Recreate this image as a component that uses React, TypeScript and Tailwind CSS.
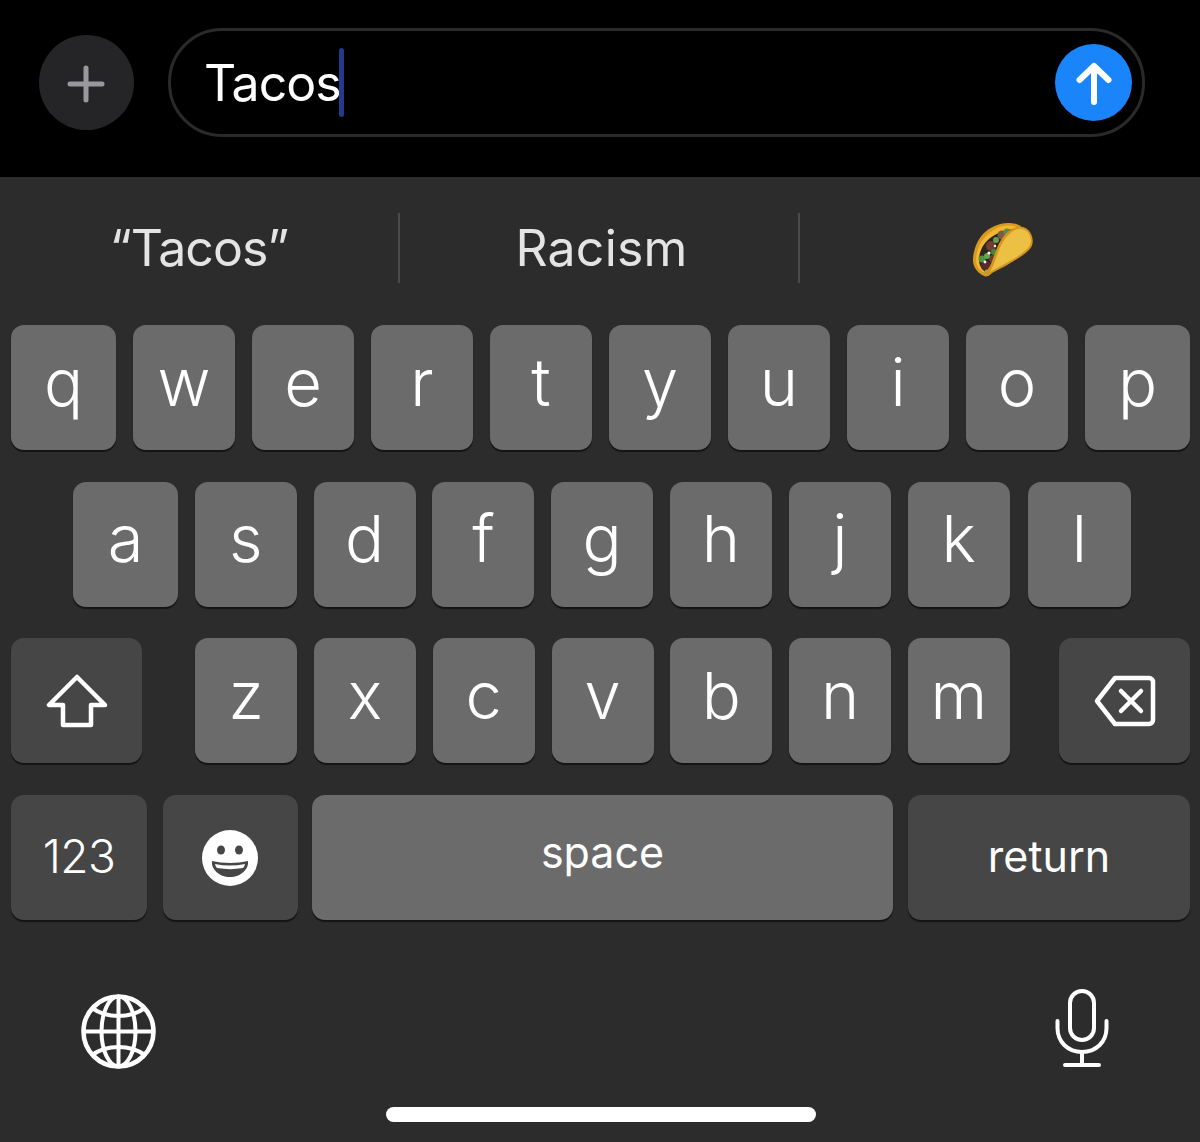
import React from "react";

const keyBase =
  "flex items-center justify-center rounded-[13px] text-white shadow-[0_2px_1px_rgba(0,0,0,0.55)] h-[125px]";
const light = "bg-[#6b6b6b]";
const dark = "bg-[#464646]";
const letterText = "text-[65px] font-light leading-none pb-[11px] shrink-0";

function Letter({ c, w = "w-[102px]" }: { c: string; w?: string }) {
  return <div className={`${keyBase} ${light} ${w} ${letterText}`}>{c}</div>;
}

function Taco() {
  return (
    <svg width="62" height="56" viewBox="0 0 62 56">
      <path d="M11 54C3 50 0 44 0 38 0 30 3 20 10 12 17 5 26 1 35 1c5 0 10 1 13 3L18 52c-2 2-5 3-7 2z" fill="#d9981f" />
      <path d="M3 38C3 29 7 20 13 14 19 8 26 4 34 3.500c3 0 8 .5 10 1.500L16 50c-2 1-4 1-6 0-4-2-7-7-7-12z" fill="#efb832" />
      <path d="M6 38C6 30 10 22 16 17c6-5 14-9 26-10L20 42l-5 9c-4-1-9-6-9-13z" fill="#30241c" />
      <circle cx="13" cy="44" r="5" fill="#5b2a2a" />
      <circle cx="20" cy="37" r="4" fill="#6a3a30" />
      <circle cx="18" cy="24" r="5" fill="#6f3f36" />
      <circle cx="29" cy="13" r="4.500" fill="#7b5a48" />
      <circle cx="34" cy="10" r="3.500" fill="#5f8a48" />
      <circle cx="9" cy="37" r="3.500" fill="#4f9240" />
      <circle cx="14" cy="34" r="3" fill="#62a650" />
      <circle cx="21" cy="30" r="3" fill="#3f8a3c" />
      <circle cx="23" cy="18" r="3" fill="#6aa050" />
      <circle cx="14" cy="50" r="2.500" fill="#a0a83a" />
      <circle cx="16" cy="31" r="1.600" fill="#f4f4f4" />
      <circle cx="12" cy="40" r="1.400" fill="#f4f4f4" />
      <circle cx="20" cy="41" r="1.200" fill="#f4f4f4" />
      <circle cx="22" cy="24" r="1.200" fill="#f4f4f4" />
      <path
        d="M14 54C12 52 14 48 17 44 20 38 21 33 24 26 27 18 33 9 42 5.500 49 3 55 6 58 12c3 6 2 12-2 16-3 3-7 6-12 9-8 5-17 10-25 14-2 1-4 3-5 3z"
        fill="#d3951f"
      />
      <path
        d="M17 50C21 43 23 36 26 28 29 20 35 11 43 7.500 49 5.500 54 8 56.500 13 59 18 58 23 54.500 26.500 51 30 47 33 43 35.500 35 40 26 45 17 50z"
        fill="#ecbf45"
      />
    </svg>
  );
}

function Globe() {
  return (
    <svg width="75" height="75" viewBox="0 0 75 75" fill="none" stroke="#fff" strokeWidth="4">
      <circle cx="37.500" cy="37.500" r="35" strokeWidth="4.600" />
      <ellipse cx="37.500" cy="37.500" rx="17" ry="35" />
      <path d="M37.500 2.500v70M2.500 37.500h70" />
      <path d="M11 14c7 5 16 8 26.500 8S57 19 64 14M11 61c7-5 16-8 26.500-8S57 56 64 61" />
    </svg>
  );
}

function Mic() {
  return (
    <svg width="54" height="78" viewBox="0 0 54 78" fill="none" stroke="#fff" strokeWidth="4" strokeLinecap="round">
      <rect x="15" y="2" width="24" height="49" rx="12" />
      <path d="M2.500 32v7c0 14 10.500 24 24.500 24s24.500-10 24.500-24v-7" />
      <path d="M27 63v13M10 76h34" />
    </svg>
  );
}

export default function App() {
  const sans = { fontFamily: "Inter, 'Liberation Sans', sans-serif" };
  return (
    <div className="w-[1200px] h-[1142px] bg-[#2c2c2c] overflow-hidden flex flex-col" style={sans}>
      <div className="h-[177px] bg-black flex items-start pl-[39px] pr-[55px] pt-[28px] gap-[34px] shrink-0">
        <div className="w-[95px] h-[95px] mt-[7px] rounded-full bg-[#252527] flex items-center justify-center shrink-0 pt-[2px] pr-[1px]">
          <svg width="38" height="38" viewBox="0 0 38 38" stroke="#98989d" strokeWidth="5" strokeLinecap="round">
            <path d="M19 3v32M3 19h32" />
          </svg>
        </div>
        <div className="flex-1 h-[109px] rounded-[54px] border-[3px] border-[#2a2a2c] flex items-center pl-[33px] pr-[10px] justify-between">
          <div className="flex items-center">
            <span className="text-white text-[50px] leading-none tracking-[-1px]">Tacos</span>
            <span className="w-[5px] h-[69px] rounded-full bg-[#263a8a] -ml-[2px]" />
          </div>
          <div className="w-[77px] h-[77px] rounded-full bg-[#1a85fb] flex items-center justify-center">
            <svg width="36" height="44" viewBox="0 0 36 44" fill="none" stroke="#fff" strokeWidth="6" strokeLinecap="round" strokeLinejoin="round">
              <path d="M18 41V5M3.500 19 18 5l14.500 14" />
            </svg>
          </div>
        </div>
      </div>

      <div className="flex items-center h-[148px] pb-[6px] shrink-0 text-[#e4e4e4] text-[50px]">
        <div className="w-[400px] h-[70px] flex items-center justify-center border-r-2 border-[#4a4a4a] tracking-[-1px]">“Tacos”</div>
        <div className="w-[400px] h-[70px] flex items-center justify-center border-r-2 border-[#4a4a4a] tracking-[0.2px] pl-[5px]">Racism</div>
        <div className="flex-1 flex items-center justify-center">
          <div className="ml-[8px] mt-[4px]"><Taco /></div>
        </div>
      </div>

      <div className="flex flex-col gap-[32px] pl-[11px] pr-[10px]">
        <div className="flex gap-[17px]">
          {"qwertyuiop".split("").map((c) => (
            <Letter key={c} c={c} w={c === "q" || c === "p" ? "w-[105px]" : "w-[102px]"} />
          ))}
        </div>
        <div className="flex gap-[16.8px] pl-[62px] -my-[0.5px]">
          {"asdfghjk".split("").map((c) => (
            <Letter key={c} c={c} w={c === "a" ? "w-[105px]" : "w-[102px]"} />
          ))}
          <div className="ml-[1.5px]"><Letter c="l" w="w-[103px]" /></div>
        </div>
        <div className="flex justify-between">
          <div className={`${keyBase} ${dark} w-[131px]`}>
            <svg width="62" height="54" viewBox="0 0 62 54" fill="none" stroke="#fff" strokeWidth="4.500" strokeLinejoin="round">
              <path d="M31 3 3 31h14v20h28V31h14z" />
            </svg>
          </div>
          <div className="flex gap-[16.8px] ml-[4px]">
            {"zxcvbnm".split("").map((c) => (
              <Letter key={c} c={c} />
            ))}
          </div>
          <div className={`${keyBase} ${dark} w-[131px]`}>
            <svg width="62" height="52" viewBox="0 0 62 52" fill="none" stroke="#fff" strokeWidth="4.500" strokeLinecap="round" strokeLinejoin="round">
              <path d="M21 3h34a4 4 0 0 1 4 4v38a4 4 0 0 1-4 4H21L3 26z" />
              <path d="M27 16l20 20M47 16 27 36" />
            </svg>
          </div>
        </div>
        <div className="flex">
          <div className={`${keyBase} ${dark} w-[136px] text-[46px] tracking-[-0.5px] font-light pb-[3px]`}>123</div>
          <div className={`${keyBase} ${dark} w-[135px] ml-[16px] pr-[2px]`}>
            <svg width="56" height="56" viewBox="0 0 56 56">
              <circle cx="28" cy="28" r="28" fill="#fff" />
              <ellipse cx="19" cy="20" rx="4" ry="4.500" fill="#464646" />
              <ellipse cx="37" cy="20" rx="4" ry="4.500" fill="#464646" />
              <path d="M10 31c11 2.500 25 2.500 36 0 1 8-7 16-18 16S9 39 10 31z" fill="#464646" />
              <path d="M13 34c10 2 20 2 30 0-.5 2-1 3-2 4-9 1.500-17 1.500-26 0-1-1-1.500-2-2-4z" fill="#fff" />
            </svg>
          </div>
          <div className={`${keyBase} ${light} w-[581px] ml-[14px] text-[43px] pb-[10px]`}>space</div>
          <div className={`${keyBase} ${dark} flex-1 ml-[15px] text-[43px] pb-[3px]`}>return</div>
        </div>
      </div>

      <div className="flex justify-between items-start pl-[81px] pr-[91px] mt-[68px]">
        <div className="mt-[6px]"><Globe /></div>
        <div className="mt-[1px]"><Mic /></div>
      </div>
      <div className="flex justify-center pl-[2px] mt-[38px]">
        <div className="w-[430px] h-[15px] rounded-full bg-white" />
      </div>
    </div>
  );
}
